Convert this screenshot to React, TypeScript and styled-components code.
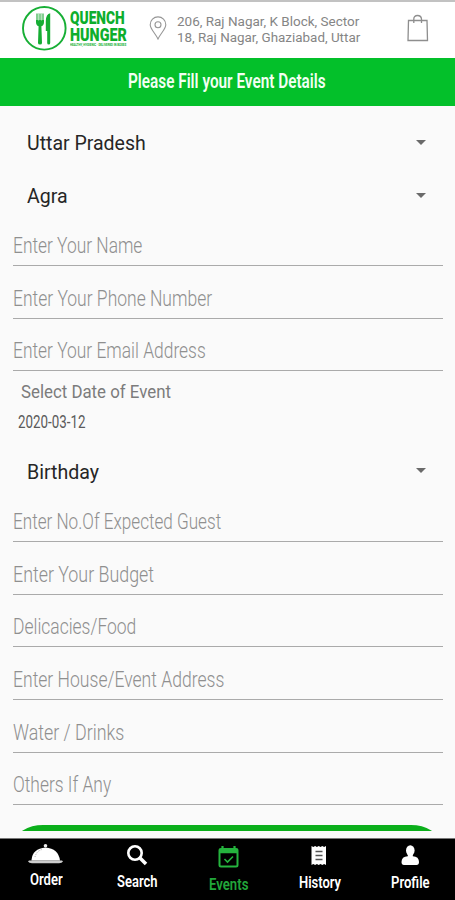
import React, { useLayoutEffect, useRef, useState } from "react";
import styled, { createGlobalStyle } from "styled-components";

const GlobalStyle = createGlobalStyle`
  * { box-sizing: border-box; }
  body { margin: 0; background: #fafafa; font-family: Roboto, "Liberation Sans", sans-serif; }
`;

const Screen = styled.main`
  width: 455px;
  height: 900px;
  display: flex;
  flex-direction: column;
  overflow: hidden;
  background: #fafafa;
`;

const Header = styled.header`
  height: 58px;
  flex: none;
  display: flex;
  align-items: flex-start;
  border-top: 2px solid #c2c2c2;
  background: #fff;
  padding-left: 21px;
`;

const Brand = styled.div`
  display: flex;
  width: 126px;
  padding-top: 2.5px;
`;

const BrandWords = styled.div`
  display: flex;
  flex-direction: column;
  padding: 4px 0 0 3px;
  color: #0dae2c;
`;

const BrandLine = styled.div`
  height: 17.5px;
  font: 900 18px/17px Roboto, sans-serif;
`;

const Tagline = styled.div`
  margin-top: 0.5px;
  height: 4px;
  font: 700 2.6px/4px Roboto, sans-serif;
`;

const PinIcon = styled.svg`
  width: 18px;
  height: 24px;
  margin-top: 13.5px;
  margin-left: 2px;
`;

const Address = styled.div`
  width: 230px;
  margin: 11px 0 0 10px;
  color: #858585;
  font-size: 13.6px;
  line-height: 16px;
`;

const BagIcon = styled.svg`
  width: 22px;
  height: 28px;
  margin-top: 12px;
`;

const Banner = styled.h1`
  height: 48px;
  flex: none;
  margin: 0;
  padding: 0 0 1px 128px;
  display: flex;
  align-items: center;
  background: #03c02a;
  color: #f2fff3;
  font-size: 19.5px;
  font-weight: 600;
`;

const Form = styled.form`
  flex: 1;
  min-height: 0;
  padding: 11px 12px 0 13px;
  overflow: hidden;
`;

const SelectRow = styled.div`
  height: 52.7px;
  display: flex;
  align-items: center;
  justify-content: space-between;
  padding: 0 17.5px 0 14px;
  color: #262626;
  font-size: 20px;
`;

const Caret = styled.span`
  border: 5px solid transparent;
  border-top: 5.5px solid #6a6a6a;
  border-bottom: 0;
  margin-bottom: 2px;
`;

const FieldGroup = styled.div`
  display: flex;
  flex-direction: column;
  gap: 9px;
`;

const Field = styled.div`
  height: 43.7px;
  display: flex;
  align-items: flex-end;
  border-bottom: 1.5px solid #aaa;
  padding-bottom: 8px;
  color: #8f8f8f;
  font-size: 22px;
  font-weight: 300;
  line-height: 1;
`;

const DateBlock = styled.div`
  height: 74.2px;
  display: flex;
  flex-direction: column;
  padding: 9.5px 0 0 5px;
`;

const DateLabel = styled.div`
  padding-left: 2.5px;
  color: #7c7c7c;
  font-size: 17.5px;
  line-height: 22px;
`;

const DateValue = styled.div`
  margin-top: 8.5px;
  color: #5b5b5b;
  font-size: 18px;
  line-height: 22px;
`;

const SubmitClip = styled.div`
  height: 6px;
  margin: 20px 4px 0 2px;
  overflow: hidden;
`;

const Submit = styled.button`
  display: block;
  width: 100%;
  height: 46px;
  border: 0;
  border-radius: 28px / 18px;
  background: #0baf1b;
`;

const Nav = styled.nav`
  height: 62.5px;
  flex: none;
  display: grid;
  grid-template-columns: repeat(5, 1fr);
  border-top: 1px solid #777;
  background: #000;
`;

const NavItem = styled.a<{ $active?: boolean }>`
  display: flex;
  flex-direction: column;
  align-items: center;
  color: ${(p) => (p.$active ? "#22a63a" : "#fff")};
  padding-top: 4px;
`;

const NavLabel = styled.span<{ $drop: number }>`
  margin-top: ${(p) => p.$drop}px;
  padding-left: 2px;
  font-size: 17px;
  font-weight: 600;
  line-height: 20px;
`;

const NavIcon = styled.svg`
  width: 36px;
  height: 25px;
  flex: none;
`;

const FitBox = styled.span`
  display: block;
  white-space: nowrap;
`;

const FitInner = styled.span`
  display: inline-block;
  vertical-align: top;
  transform-origin: 0 50%;
`;

/* Condenses a line of type horizontally to the requested width. */
function Fit({ w, children }: { w: number; children: string }) {
  const ref = useRef<HTMLSpanElement>(null);
  const [scale, setScale] = useState(1);
  useLayoutEffect(() => {
    if (ref.current) setScale(w / ref.current.offsetWidth);
  }, [w, children]);
  return (
    <FitBox style={{ width: w }}>
      <FitInner ref={ref} style={{ transform: `scaleX(${scale})` }}>{children}</FitInner>
    </FitBox>
  );
}

function Logo() {
  return (
    <svg width="46" height="46" viewBox="0 0 46 46">
      <circle cx="23.3" cy="23.3" r="21.3" fill="none" stroke="#17af35" strokeWidth="1.9" />
      <path d="M15 9v8q0 3.500 2.600 4.200L17 38q0 1.600 2 1.600T21 38l-.6-16.800Q23 20.500 23 17V9z" fill="#15ad33" />
      <path d="M15 8.500h8v6.500h-8z" fill="#82cf90" />
      <path d="M17.600 8.500v7M20.400 8.500v7" stroke="#c8ecce" strokeWidth=".8" />
      <path d="M29.200 8.300V38q0 1.500-1.500 1.500T26.200 38V26h-1.400V16q.2-7 4.400-7.700z" fill="#15ad33" />
    </svg>
  );
}

function SelectField({ w, label }: { w: number; label: string }) {
  return <SelectRow><Fit w={w}>{label}</Fit><Caret /></SelectRow>;
}

function Fields({ items }: { items: [string, number][] }) {
  return (
    <FieldGroup>
      {items.map(([text, w]) => <Field key={text}><Fit w={w}>{text}</Fit></Field>)}
    </FieldGroup>
  );
}

const contactFields: [string, number][] = [
  ["Enter Your Name", 129.5],
  ["Enter Your Phone Number", 199.5],
  ["Enter Your Email Address", 193],
];

const eventFields: [string, number][] = [
  ["Enter No.Of Expected Guest", 208.5],
  ["Enter Your Budget", 141],
  ["Delicacies/Food", 123],
  ["Enter House/Event Address", 211.5],
  ["Water / Drinks", 111],
  ["Others If Any", 98],
];

export default function App() {
  return (
    <>
      <GlobalStyle />
      <Screen>
        <Header>
          <Brand>
            <Logo />
            <BrandWords>
              <BrandLine><Fit w={55}>QUENCH</Fit></BrandLine>
              <BrandLine><Fit w={56.5}>HUNGER</Fit></BrandLine>
              <Tagline><Fit w={56}>HEALTHY, HYGIENIC · DELIVERED IN BOXES</Fit></Tagline>
            </BrandWords>
          </Brand>
          <PinIcon viewBox="0 0 18 24" fill="none" stroke="#969696" strokeWidth="1.1">
            <path d="M9 23C6.500 17.500 1.200 13 1.200 8.700a7.800 7.800 0 0 1 15.600 0C16.800 13 11.500 17.500 9 23z" />
            <circle cx="9" cy="8.700" r="3" />
          </PinIcon>
          <Address>
            <Fit w={182.5}>206, Raj Nagar, K Block, Sector</Fit>
            <Fit w={183.5}>18, Raj Nagar, Ghaziabad, Uttar</Fit>
          </Address>
          <BagIcon viewBox="0 0 22 28" fill="none" stroke="#8e8e8e" strokeWidth="1.3">
            <path d="M1.500 6.500h18.500l.5 20H1z" />
            <path d="M6.800 9V5Q6.800 1.500 10.500 1.500T14.500 5v4" />
          </BagIcon>
        </Header>
        <Banner><Fit w={198}>Please Fill your Event Details</Fit></Banner>
        <Form>
          <SelectField w={119} label="Uttar Pradesh" />
          <SelectField w={41} label="Agra" />
          <Fields items={contactFields} />
          <DateBlock>
            <DateLabel><Fit w={150}>Select Date of Event</Fit></DateLabel>
            <DateValue><Fit w={67.5}>2020-03-12</Fit></DateValue>
          </DateBlock>
          <SelectField w={72.5} label="Birthday" />
          <Fields items={eventFields} />
          <SubmitClip><Submit type="button" aria-label="Submit" /></SubmitClip>
        </Form>
        <Nav>
          <NavItem>
            <NavIcon viewBox="0 0 36 25">
              <path d="M1 17.500h33l1 1q-1 1.700-4 1.700H4q-3 0-4-1.700z" fill="#ccc" />
              <path d="M3.500 17Q4.500 5.500 17.500 4.500 30.500 5.500 32 17.600H3.500z" fill="#fff" />
              <circle cx="17.500" cy="2.800" r="1.800" fill="#eee" />
              <path d="M7 14q1.500-6 7-7.500" fill="none" stroke="#999" strokeWidth=".8" strokeDasharray="1 1" />
            </NavIcon>
            <NavLabel $drop={1.5}><Fit w={33}>Order</Fit></NavLabel>
          </NavItem>
          <NavItem>
            <NavIcon viewBox="0 0 36 25" fill="none" stroke="#fff">
              <circle cx="16" cy="10" r="6.700" strokeWidth="2.600" />
              <path d="m21 15 6 6" strokeWidth="3.600" />
            </NavIcon>
            <NavLabel $drop={3.5}><Fit w={40.5}>Search</Fit></NavLabel>
          </NavItem>
          <NavItem $active>
            <NavIcon viewBox="0 0 36 25" fill="none" stroke="#25b43e">
              <rect x="9.500" y="6" width="18" height="17.500" rx="1.500" strokeWidth="2" />
              <path d="M9 8h19" strokeWidth="4.500" />
              <path d="M12.500 3v4M24.500 3v4" strokeWidth="2.200" />
              <path d="m14.500 16 3 3 5.500-5.500" strokeWidth="1.600" />
            </NavIcon>
            <NavLabel $drop={6.5}><Fit w={39.5}>Events</Fit></NavLabel>
          </NavItem>
          <NavItem>
            <NavIcon viewBox="0 0 36 25">
              <path d="m10.500 3 1.800 1 1.800-1 1.800 1 1.800-1L19.500 4l1.800-1 1.800 1L25 3v19l-1.900-1-1.800 1-1.800-1-1.800 1-1.800-1-1.800 1-1.800-1-1.800 1z" fill="#fff" />
              <path d="M14.500 8.500h7M14.500 12.500h7M14.500 16.500h7" stroke="#555" strokeWidth="1.300" />
            </NavIcon>
            <NavLabel $drop={4}><Fit w={42}>History</Fit></NavLabel>
          </NavItem>
          <NavItem>
            <NavIcon viewBox="0 0 36 25" fill="#fff">
              <ellipse cx="18.300" cy="7.500" rx="4.300" ry="5.200" />
              <path d="M15.800 11h5v2.200Q27 13.500 27 19q0 3-2.500 3h-12.500q-2.500 0-2.500-3 0-5.500 6.300-5.800z" />
            </NavIcon>
            <NavLabel $drop={4}><Fit w={38.5}>Profile</Fit></NavLabel>
          </NavItem>
        </Nav>
      </Screen>
    </>
  );
}
